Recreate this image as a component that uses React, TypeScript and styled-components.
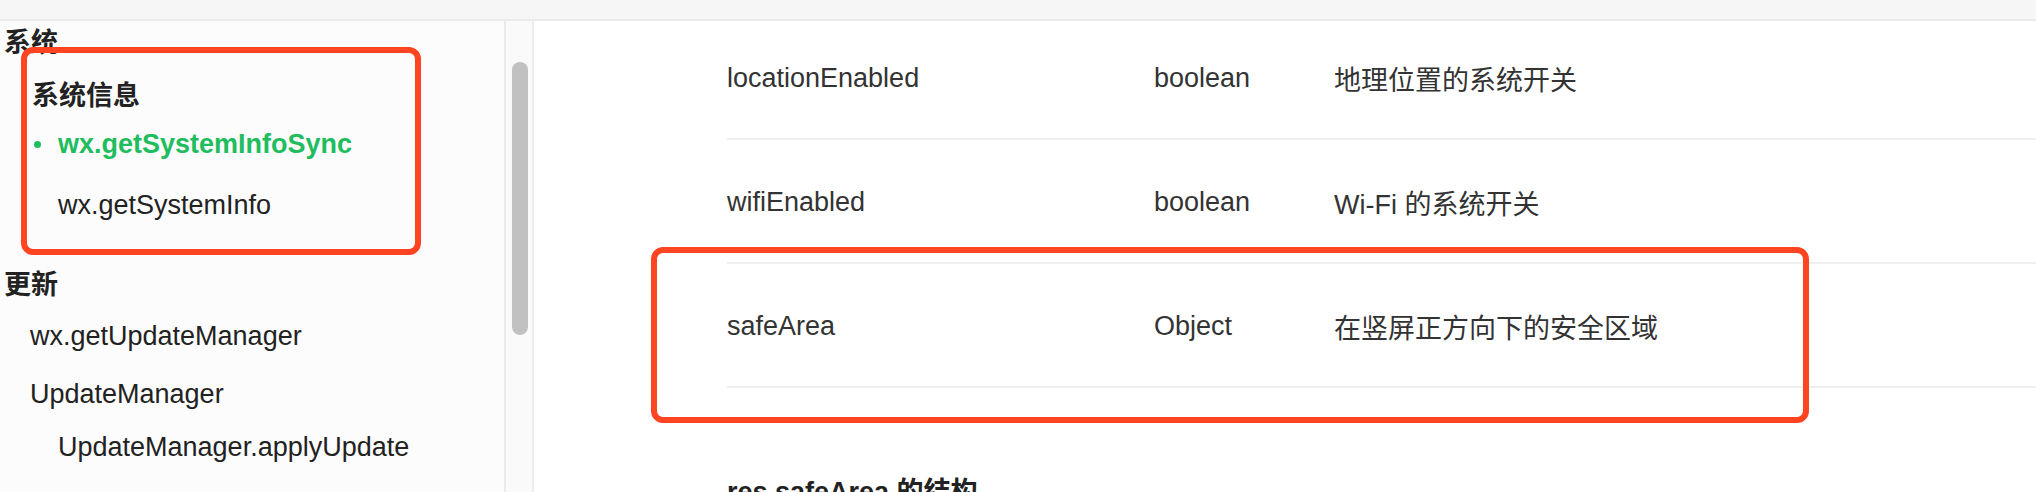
import { FC } from "react";
import styled, { createGlobalStyle } from "styled-components";

const GlobalStyle = createGlobalStyle`
  html, body {
    margin: 0;
    padding: 0;
    background: #ffffff;
  }
  body {
    font-family: "Liberation Sans", "Noto Sans CJK SC", sans-serif;
    color: #222222;
  }
`;

interface NavEntry {
  label: string;
  kind: "group" | "title" | "item";
  indent: number;
  height: number;
  gap?: number;
  active?: boolean;
}

const nav: NavEntry[] = [
  { label: "系统", kind: "group", indent: 4, height: 38 },
  { label: "系统信息", kind: "title", indent: 32, height: 40, gap: 14 },
  { label: "wx.getSystemInfoSync", kind: "item", indent: 58, height: 62, active: true },
  { label: "wx.getSystemInfo", kind: "item", indent: 58, height: 60 },
  { label: "更新", kind: "group", indent: 4, height: 40, gap: 27 },
  { label: "wx.getUpdateManager", kind: "item", indent: 30, height: 60, gap: 4 },
  { label: "UpdateManager", kind: "item", indent: 30, height: 56 },
  { label: "UpdateManager.applyUpdate", kind: "item", indent: 58, height: 50 },
];

const rows = [
  { name: "locationEnabled", type: "boolean", desc: "地理位置的系统开关" },
  { name: "wifiEnabled", type: "boolean", desc: "Wi-Fi 的系统开关" },
  { name: "safeArea", type: "Object", desc: "在竖屏正方向下的安全区域" },
];

const App: FC = () => {
  return (
    <Page>
      <GlobalStyle />
      <TopBar />
      <Body>
        <Sidebar>
          {nav.map((n) => (
            <NavRow
              key={n.label}
              $kind={n.kind}
              $indent={n.indent}
              $h={n.height}
              $gap={n.gap || 0}
              $active={!!n.active}
            >
              {n.active && <Dot />}
              {n.label}
            </NavRow>
          ))}
        </Sidebar>
        <ScrollTrack>
          <Thumb />
        </ScrollTrack>
        <Main>
          <Table>
            {rows.map((r) => (
              <Row key={r.name}>
                <Cell>{r.name}</Cell>
                <Cell>{r.type}</Cell>
                <Cell>{r.desc}</Cell>
              </Row>
            ))}
          </Table>
          <SectionTitle>res.safeArea 的结构</SectionTitle>
        </Main>
      </Body>
      <Callout $x={21} $y={47} $w={400} $h={208} />
      <Callout $x={651} $y={247} $w={1158} $h={176} />
    </Page>
  );
};

export default App;

const Page = styled.div`
  position: relative;
  width: 100%;
  height: 492px;
  overflow: hidden;
  display: flex;
  flex-direction: column;
`;

const TopBar = styled.div`
  height: 19px;
  flex-shrink: 0;
  background: #f6f6f6;
  border-bottom: 2px solid #ebebeb;
`;

const Body = styled.div`
  flex: 1;
  display: flex;
  min-height: 0;
`;

const Sidebar = styled.div`
  width: 504px;
  flex-shrink: 0;
  background: #fcfcfc;
  display: flex;
  flex-direction: column;
`;

const NavRow = styled.div<{
  $kind: string;
  $indent: number;
  $h: number;
  $gap: number;
  $active: boolean;
}>`
  position: relative;
  display: flex;
  align-items: center;
  height: ${(p) => p.$h}px;
  margin-top: ${(p) => p.$gap}px;
  padding-left: ${(p) => p.$indent}px;
  font-size: 27px;
  white-space: nowrap;
  font-weight: ${(p) => (p.$kind === "item" && !p.$active ? 400 : 700)};
  color: ${(p) => (p.$active ? "#1fbd5e" : "#222222")};
`;

const Dot = styled.span`
  position: absolute;
  left: 34px;
  top: 50%;
  width: 7px;
  height: 7px;
  margin-top: -3px;
  border-radius: 50%;
  background: #1fbd5e;
`;

const ScrollTrack = styled.div`
  width: 26px;
  flex-shrink: 0;
  background: #fafafa;
  border-left: 2px solid #ebebeb;
  border-right: 2px solid #ebebeb;
  padding-top: 41px;
`;

const Thumb = styled.div`
  width: 16px;
  height: 273px;
  margin-left: 6px;
  border-radius: 8px;
  background: #c1c1c1;
`;

const Main = styled.div`
  flex: 1;
  min-width: 0;
  background: #ffffff;
  overflow: hidden;
  padding-left: 193px;
`;

const Table = styled.div`
  margin-top: -5px;
`;

const Row = styled.div`
  display: grid;
  grid-template-columns: 427px 180px 1fr;
  align-items: center;
  height: 122px;
  border-bottom: 2px solid #efefef;
`;

const Cell = styled.div`
  padding-top: 3px;
  font-size: 27px;
  color: #333333;
  white-space: nowrap;
`;

const SectionTitle = styled.div`
  margin-top: 84px;
  font-size: 27px;
  line-height: 40px;
  font-weight: 700;
  color: #222222;
  white-space: nowrap;
`;

const Callout = styled.div<{ $x: number; $y: number; $w: number; $h: number }>`
  position: absolute;
  left: ${(p) => p.$x}px;
  top: ${(p) => p.$y}px;
  width: ${(p) => p.$w}px;
  height: ${(p) => p.$h}px;
  box-sizing: border-box;
  border: 6px solid #ff4422;
  border-radius: 12px;
  pointer-events: none;
`;
